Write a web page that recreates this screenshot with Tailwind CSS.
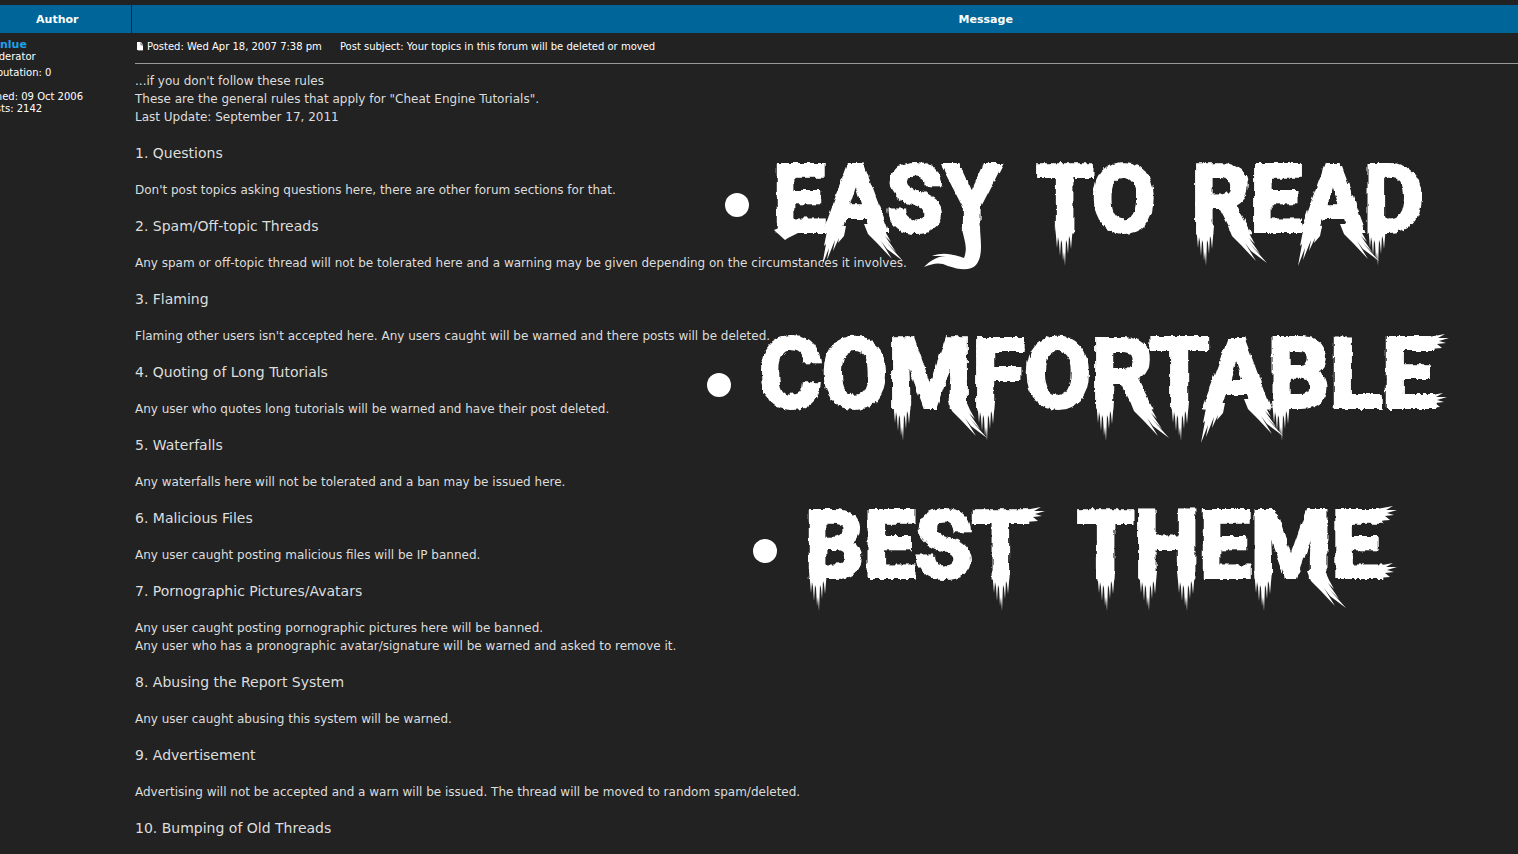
<!DOCTYPE html>
<html lang="en">
<head>
<meta charset="utf-8">
<title>Your topics in this forum will be deleted or moved</title>
<script src="https://cdn.jsdelivr.net/npm/@tailwindcss/browser@4"></script>
</head>
<body class="relative h-screen overflow-hidden bg-[#222222] pt-[5px] font-['Verdana','DejaVu_Sans',sans-serif] text-[#dddddd]">
<div class="overflow-hidden">
<table class="-ml-4 w-[calc(100%+16px)] table-fixed border-collapse">
  <colgroup><col class="w-[147px]"><col></colgroup>
  <thead>
    <tr class="h-7 bg-[#006699] text-[11px] leading-4 text-white">
      <th scope="col" class="border-r border-[#222222] pt-0.5">Author</th>
      <th scope="col" class="pt-0.5 pr-0 pl-[322px]">Message</th>
    </tr>
  </thead>
  <tbody>
    <tr class="align-top">
      <td class="pt-[5px] text-[10px] leading-3 whitespace-nowrap text-white">
        <a href="#" class="block pl-4 text-[11px] leading-[13px] font-bold text-[#1ba1e8]">nlue</a>
        <p>Moderator</p>
        <p class="mt-1">Reputation: 0</p>
        <p class="mt-3">Joined: 09 Oct 2006</p>
        <p>Posts: 2142</p>
      </td>
      <td class="pt-px pl-1">
        <div class="flex h-[30px] items-center border-b border-[#999999] pb-1 text-[10px] leading-3 text-white">
          <a href="#" aria-label="View post" class="mr-1 ml-0.5 block"><svg class="block h-[9px] w-1.5" viewBox="0 0 6 9"><path d="M0 0h4l2 3v5H0z" fill="#fff"/><path d="M4 0v3h2M1 8.500h5" fill="none" stroke="#777"/></svg></a>
          <span>Posted: Wed Apr 18, 2007 7:38 pm</span>
          <span class="ml-[18px]">Post subject: Your topics in this forum will be deleted or moved</span>
        </div>
        <article class="pt-2 text-[12px] leading-[18px]">
          <p>...if you don't follow these rules<br>These are the general rules that apply for "Cheat Engine Tutorials".<br>Last Update: September 17, 2011</p>
          <h3 class="my-[18px] text-[14px] leading-[19px]">1. Questions</h3>
          <p>Don't post topics asking questions here, there are other forum sections for that.</p>
          <h3 class="my-[18px] text-[14px] leading-[19px]">2. Spam/Off-topic Threads</h3>
          <p>Any spam or off-topic thread will not be tolerated here and a warning may be given depending on the circumstances it involves.</p>
          <h3 class="my-[18px] text-[14px] leading-[19px]">3. Flaming</h3>
          <p>Flaming other users isn't accepted here. Any users caught will be warned and there posts will be deleted.</p>
          <h3 class="my-[18px] text-[14px] leading-[19px]">4. Quoting of Long Tutorials</h3>
          <p>Any user who quotes long tutorials will be warned and have their post deleted.</p>
          <h3 class="my-[18px] text-[14px] leading-[19px]">5. Waterfalls</h3>
          <p>Any waterfalls here will not be tolerated and a ban may be issued here.</p>
          <h3 class="my-[18px] text-[14px] leading-[19px]">6. Malicious Files</h3>
          <p>Any user caught posting malicious files will be IP banned.</p>
          <h3 class="my-[18px] text-[14px] leading-[19px]">7. Pornographic Pictures/Avatars</h3>
          <p>Any user caught posting pornographic pictures here will be banned.<br>Any user who has a pronographic avatar/signature will be warned and asked to remove it.</p>
          <h3 class="my-[18px] text-[14px] leading-[19px]">8. Abusing the Report System</h3>
          <p>Any user caught abusing this system will be warned.</p>
          <h3 class="my-[18px] text-[14px] leading-[19px]">9. Advertisement</h3>
          <p>Advertising will not be accepted and a warn will be issued. The thread will be moved to random spam/deleted.</p>
          <h3 class="my-[18px] text-[14px] leading-[19px]">10. Bumping of Old Threads</h3>
        </article>
      </td>
    </tr>
  </tbody>
</table>
</div>

<svg class="absolute size-0" aria-hidden="true">
  <filter id="rough" x="-5%" y="-10%" width="110%" height="130%">
    <feTurbulence type="fractalNoise" baseFrequency="0.2 0.08" numOctaves="3" seed="4" result="n"/>
    <feDisplacementMap in="SourceGraphic" in2="n" scale="5" xChannelSelector="R" yChannelSelector="G"/>
  </filter>
</svg>
<ul class="font-['Roboto',sans-serif] text-[92px] leading-[104px] font-bold whitespace-nowrap text-white [-webkit-text-stroke:4px_white] [stroke-linejoin:round]">
  <li class="absolute top-[148px] left-[725px] flex items-center"><span class="mt-2.5 mr-6 size-6 rounded-full bg-white"></span><span class="flex gap-9 [filter:url(#rough)]"><span>EASY</span><span>TO</span><span>READ</span></span></li>
  <li class="absolute top-[322px] left-[707px] flex items-center text-[96px]"><span class="mt-[22px] mr-7 size-6 rounded-full bg-white"></span><span class="[filter:url(#rough)]">COMFORTABLE</span></li>
  <li class="absolute top-[494px] left-[753px] flex items-center"><span class="mt-2.5 mr-7 size-6 rounded-full bg-white"></span><span class="flex gap-12 [filter:url(#rough)]"><span>BEST</span><span>THEME</span></span></li>
</ul>

<!-- dry-brush bristles trailing below the strokes -->
<svg class="pointer-events-none absolute top-0 left-[700px] h-[640px] w-[760px]" viewBox="700 0 760 640" fill="#fff" aria-hidden="true">
  <defs>
    <path id="down" d="M0-5H18L17 6 16 18 15 8 14 5 13 23 12 12 11 9 10 35 9 21 8 30 7 12 6 9 5 25 4 11 3 6 2 17 1 5Z"/>
    <path id="left" d="M2-5H20L18 5 12 12 13 7 7 20 9 9 1 29 3 17-4 35 0 13-2 15Z"/>
    <path id="right" d="M-2-5H16L20 4 25 13 19 7 30 23 20 13 37 32 21 20 15 12 26 30 11 14 2 5Z"/>
    <path id="flick" d="M0 0 16-3 9 1 20 1 10 4 17 6 8 7 13 11 0 12Z"/>
  </defs>
  <use href="#left" x="826" y="231"/><use href="#right" x="866" y="229"/>
  <use href="#down" x="1055" y="231"/>
  <use href="#down" x="1196" y="231"/><use href="#right" x="1230" y="231"/>
  <use href="#left" x="1302" y="231"/><use href="#right" x="1342" y="229"/>
  <use href="#down" x="1368" y="231"/>
  <path d="M962 225 980 226C980 240 984 255 976 265 970 271 960 270 948 266 940 262 934 263 924 267 931 260 938 256 946 256L932 256C944 251 955 255 964 258 969 245 962 237 962 225Z"/>
  <path d="M779 228 802 231 788 238 785 240 774 230Z"/>
  <use href="#down" x="893" y="406"/><use href="#right" x="950" y="406"/>
  <use href="#down" x="977" y="406"/>
  <use href="#down" x="1096" y="406"/><use href="#right" x="1132" y="406"/>
  <use href="#down" x="1171" y="406"/>
  <use href="#left" x="1205" y="408"/><use href="#right" x="1246" y="404"/>
  <use href="#down" x="1272" y="406"/>
  <use href="#flick" x="1429" y="337"/><use href="#flick" x="1427" y="396"/>
  <use href="#down" x="809" y="576"/>
  <use href="#down" x="992" y="576"/>
  <use href="#down" x="1097" y="576"/>
  <use href="#down" x="1139" y="576"/><use href="#down" x="1177" y="576"/>
  <use href="#down" x="1254" y="576"/><use href="#right" x="1309" y="576"/>
  <use href="#flick" x="1025" y="510"/><use href="#flick" x="1377" y="509"/><use href="#flick" x="1377" y="566"/>
</svg>
</body>
</html>
